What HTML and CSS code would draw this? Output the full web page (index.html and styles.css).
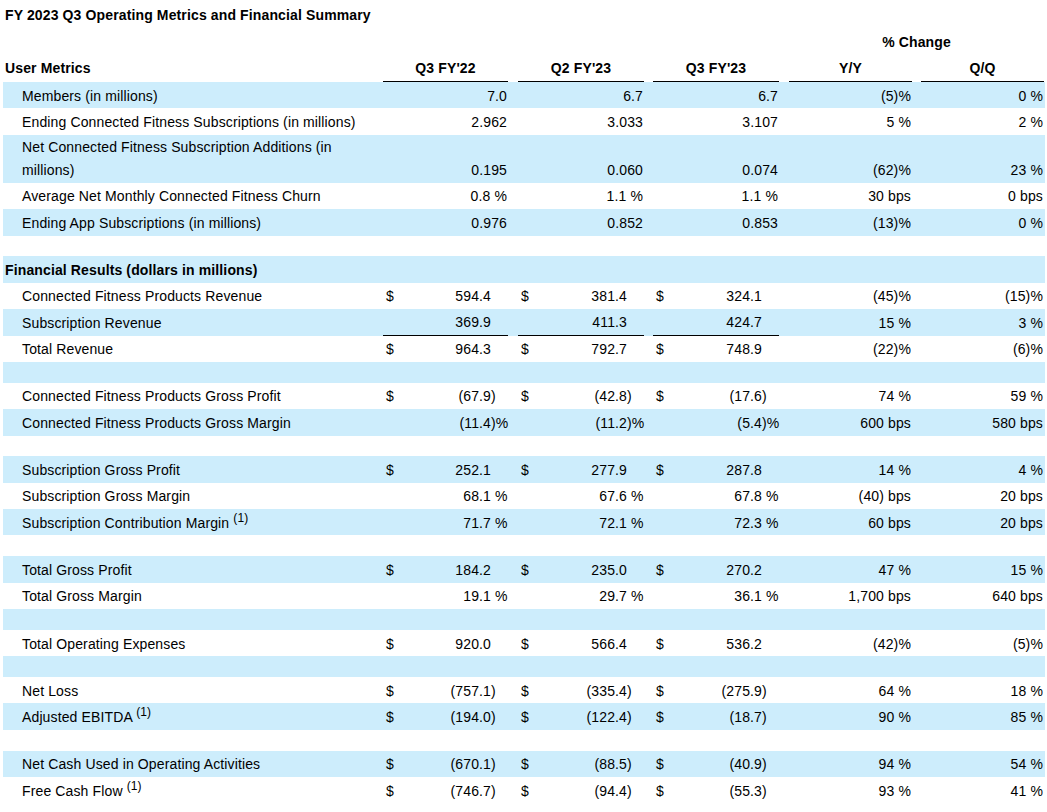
FILE: index.html
```html
<!DOCTYPE html>
<html lang="en">
<head>
<meta charset="utf-8">
<title>FY 2023 Q3 Operating Metrics and Financial Summary</title>
<link rel="stylesheet" href="styles.css">
</head>
<body>
<div class="sheet">
  <div class="title">FY 2023 Q3 Operating Metrics and Financial Summary</div>

  <div class="pct"><div class="pct-label">% Change</div></div>

  <div class="row hdr">
    <div class="lbl sec">User Metrics</div>
    <div class="ch">Q3 FY'22</div>
    <div class="ch">Q2 FY'23</div>
    <div class="ch">Q3 FY'23</div>
    <div class="ch">Y/Y</div>
    <div class="ch">Q/Q</div>
  </div>

  <div class="row b">
    <div class="lbl">Members (in millions)</div>
    <div class="v um">7.0</div>
    <div class="v um">6.7</div>
    <div class="v um">6.7</div>
    <div class="p">(5)%</div>
    <div class="p">0 %</div>
  </div>
  <div class="row">
    <div class="lbl">Ending Connected Fitness Subscriptions (in millions)</div>
    <div class="v um">2.962</div>
    <div class="v um">3.033</div>
    <div class="v um">3.107</div>
    <div class="p">5 %</div>
    <div class="p">2 %</div>
  </div>
  <div class="row b two">
    <div class="lbl">Net Connected Fitness Subscription Additions (in<br>millions)</div>
    <div class="v um">0.195</div>
    <div class="v um">0.060</div>
    <div class="v um">0.074</div>
    <div class="p">(62)%</div>
    <div class="p">23 %</div>
  </div>
  <div class="row">
    <div class="lbl">Average Net Monthly Connected Fitness Churn</div>
    <div class="v um">0.8 %</div>
    <div class="v um">1.1 %</div>
    <div class="v um">1.1 %</div>
    <div class="p">30 bps</div>
    <div class="p">0 bps</div>
  </div>
  <div class="row b">
    <div class="lbl">Ending App Subscriptions (in millions)</div>
    <div class="v um">0.976</div>
    <div class="v um">0.852</div>
    <div class="v um">0.853</div>
    <div class="p">(13)%</div>
    <div class="p">0 %</div>
  </div>

  <div class="sp"></div>

  <div class="row b">
    <div class="lbl sec">Financial Results (dollars in millions)</div>
  </div>
  <div class="row">
    <div class="lbl">Connected Fitness Products Revenue</div>
    <div class="v cur"><span>$</span><span>594.4</span></div>
    <div class="v cur"><span>$</span><span>381.4</span></div>
    <div class="v cur"><span>$</span><span>324.1</span></div>
    <div class="p">(45)%</div>
    <div class="p">(15)%</div>
  </div>
  <div class="row b">
    <div class="lbl">Subscription Revenue</div>
    <div class="v ul">369.9</div>
    <div class="v ul">411.3</div>
    <div class="v ul">424.7</div>
    <div class="p">15 %</div>
    <div class="p">3 %</div>
  </div>
  <div class="row">
    <div class="lbl">Total Revenue</div>
    <div class="v cur"><span>$</span><span>964.3</span></div>
    <div class="v cur"><span>$</span><span>792.7</span></div>
    <div class="v cur"><span>$</span><span>748.9</span></div>
    <div class="p">(22)%</div>
    <div class="p">(6)%</div>
  </div>

  <div class="sp b"></div>

  <div class="row">
    <div class="lbl">Connected Fitness Products Gross Profit</div>
    <div class="v cur"><span>$</span><span>(67.9<span class="h">)</span></span></div>
    <div class="v cur"><span>$</span><span>(42.8<span class="h">)</span></span></div>
    <div class="v cur"><span>$</span><span>(17.6<span class="h">)</span></span></div>
    <div class="p">74 %</div>
    <div class="p">59 %</div>
  </div>
  <div class="row b">
    <div class="lbl">Connected Fitness Products Gross Margin</div>
    <div class="v"><span>(11.4<span class="h">)%</span></span></div>
    <div class="v"><span>(11.2<span class="h">)%</span></span></div>
    <div class="v"><span>(5.4<span class="h">)%</span></span></div>
    <div class="p">600 bps</div>
    <div class="p">580 bps</div>
  </div>

  <div class="sp"></div>

  <div class="row b">
    <div class="lbl">Subscription Gross Profit</div>
    <div class="v cur"><span>$</span><span>252.1</span></div>
    <div class="v cur"><span>$</span><span>277.9</span></div>
    <div class="v cur"><span>$</span><span>287.8</span></div>
    <div class="p">14 %</div>
    <div class="p">4 %</div>
  </div>
  <div class="row">
    <div class="lbl">Subscription Gross Margin</div>
    <div class="v"><span>68.1<span class="h">&nbsp;%</span></span></div>
    <div class="v"><span>67.6<span class="h">&nbsp;%</span></span></div>
    <div class="v"><span>67.8<span class="h">&nbsp;%</span></span></div>
    <div class="p">(40) bps</div>
    <div class="p">20 bps</div>
  </div>
  <div class="row b">
    <div class="lbl">Subscription Contribution Margin <sup class="fn">(1)</sup></div>
    <div class="v"><span>71.7<span class="h">&nbsp;%</span></span></div>
    <div class="v"><span>72.1<span class="h">&nbsp;%</span></span></div>
    <div class="v"><span>72.3<span class="h">&nbsp;%</span></span></div>
    <div class="p">60 bps</div>
    <div class="p">20 bps</div>
  </div>

  <div class="sp"></div>

  <div class="row b">
    <div class="lbl">Total Gross Profit</div>
    <div class="v cur"><span>$</span><span>184.2</span></div>
    <div class="v cur"><span>$</span><span>235.0</span></div>
    <div class="v cur"><span>$</span><span>270.2</span></div>
    <div class="p">47 %</div>
    <div class="p">15 %</div>
  </div>
  <div class="row">
    <div class="lbl">Total Gross Margin</div>
    <div class="v"><span>19.1<span class="h">&nbsp;%</span></span></div>
    <div class="v"><span>29.7<span class="h">&nbsp;%</span></span></div>
    <div class="v"><span>36.1<span class="h">&nbsp;%</span></span></div>
    <div class="p">1,700 bps</div>
    <div class="p">640 bps</div>
  </div>

  <div class="sp b"></div>

  <div class="row">
    <div class="lbl">Total Operating Expenses</div>
    <div class="v cur"><span>$</span><span>920.0</span></div>
    <div class="v cur"><span>$</span><span>566.4</span></div>
    <div class="v cur"><span>$</span><span>536.2</span></div>
    <div class="p">(42)%</div>
    <div class="p">(5)%</div>
  </div>

  <div class="sp b"></div>

  <div class="row">
    <div class="lbl">Net Loss</div>
    <div class="v cur"><span>$</span><span>(757.1<span class="h">)</span></span></div>
    <div class="v cur"><span>$</span><span>(335.4<span class="h">)</span></span></div>
    <div class="v cur"><span>$</span><span>(275.9<span class="h">)</span></span></div>
    <div class="p">64 %</div>
    <div class="p">18 %</div>
  </div>
  <div class="row b">
    <div class="lbl">Adjusted EBITDA <sup class="fn">(1)</sup></div>
    <div class="v cur"><span>$</span><span>(194.0<span class="h">)</span></span></div>
    <div class="v cur"><span>$</span><span>(122.4<span class="h">)</span></span></div>
    <div class="v cur"><span>$</span><span>(18.7<span class="h">)</span></span></div>
    <div class="p">90 %</div>
    <div class="p">85 %</div>
  </div>

  <div class="sp"></div>

  <div class="row b">
    <div class="lbl">Net Cash Used in Operating Activities</div>
    <div class="v cur"><span>$</span><span>(670.1<span class="h">)</span></span></div>
    <div class="v cur"><span>$</span><span>(88.5<span class="h">)</span></span></div>
    <div class="v cur"><span>$</span><span>(40.9<span class="h">)</span></span></div>
    <div class="p">94 %</div>
    <div class="p">54 %</div>
  </div>
  <div class="row">
    <div class="lbl">Free Cash Flow <sup class="fn">(1)</sup></div>
    <div class="v cur"><span>$</span><span>(746.7<span class="h">)</span></span></div>
    <div class="v cur"><span>$</span><span>(94.4<span class="h">)</span></span></div>
    <div class="v cur"><span>$</span><span>(55.3<span class="h">)</span></span></div>
    <div class="p">93 %</div>
    <div class="p">41 %</div>
  </div>
</div>
</body>
</html>
```

FILE: styles.css
```css
* {
  box-sizing: border-box;
}

body {
  margin: 0;
  background: #ffffff;
  color: #000000;
  font-family: "Liberation Sans", Arial, sans-serif;
  font-size: 14px;
  letter-spacing: 0.13px;
}

.sheet {
  width: 1042px;
  margin-left: 3px;
}

.title {
  height: 30px;
  line-height: 30px;
  padding-left: 2px;
  font-weight: bold;
}

.pct {
  display: grid;
  grid-template-columns: 380px 125px 136px 135px 133px 132px;
  height: 25px;
  line-height: 25px;
}

.pct-label {
  grid-column: 5 / 7;
  margin-left: 10px;
  text-align: center;
  font-weight: bold;
}

.row {
  display: grid;
  grid-template-columns: 380px 125px 136px 135px 133px 132px;
  align-items: center;
  min-height: 26.4px;
  line-height: 16px;
  padding-top: 1px;
  white-space: nowrap;
}

.row > :nth-child(3) { margin-left: 10px; }
.row > :nth-child(4) { margin-left: 9px; }
.row > :nth-child(5) { margin-left: 10px; }
.row > :nth-child(6) { margin-left: 9px; }

.b {
  background: #cdedfc;
}

.sp {
  height: 20.8px;
}

.lbl {
  padding-left: 19px;
}

.lbl.sec {
  padding-left: 2px;
  font-weight: bold;
}

.hdr {
  height: 27px;
  align-items: end;
  padding-top: 0;
}

.ch {
  padding-bottom: 5px;
  border-bottom: 1px solid #000;
  text-align: center;
  font-weight: bold;
}

.hdr .lbl {
  padding-bottom: 6px;
}

.two {
  height: 48px;
  align-items: end;
  padding: 1px 0;
  line-height: 23px;
}

.two .lbl {
  white-space: normal;
}

.v {
  display: flex;
  justify-content: flex-end;
  padding-right: 17px;
}

.v.um {
  padding-right: 1px;
}

.v.cur {
  justify-content: space-between;
  padding-left: 3px;
}

.v.ul {
  border-bottom: 1px solid #000;
  align-self: stretch;
  align-items: center;
  margin-top: -1px;
}

.h {
  display: inline-block;
  width: 17px;
  margin-right: -17px;
  text-align: left;
}

.p {
  text-align: right;
  padding-right: 1px;
}

.fn {
  font-size: 12px;
  line-height: 0;
  vertical-align: 6px;
}
```
